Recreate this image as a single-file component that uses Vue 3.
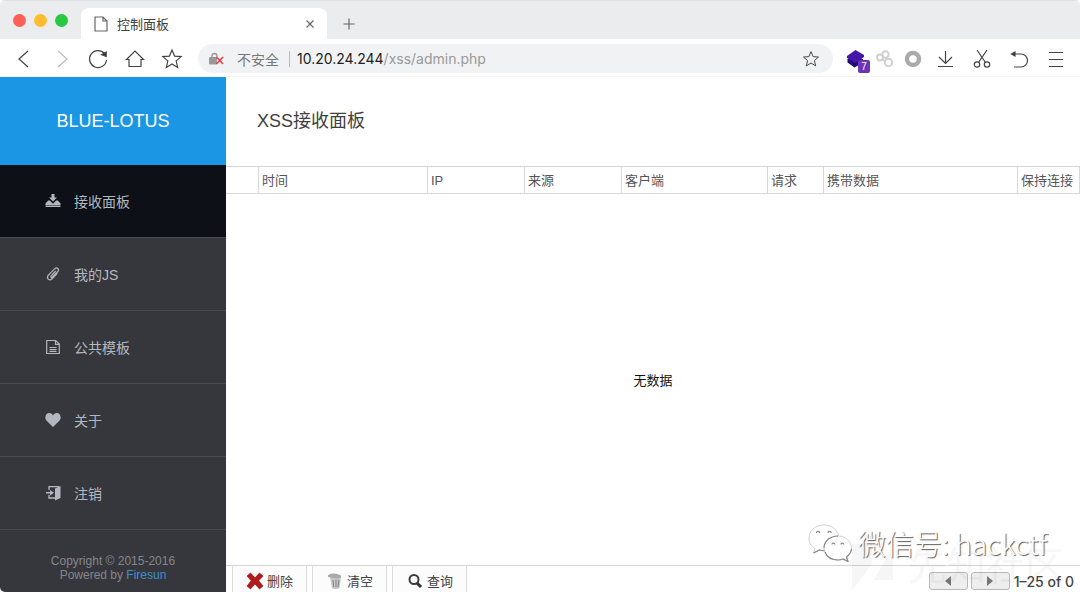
<script setup>
const columns = [
  { label: '', size: 'c-check' },
  { label: '时间', size: 'c-time' },
  { label: 'IP', size: 'c-mid' },
  { label: '来源', size: 'c-mid' },
  { label: '客户端', size: 'c-client' },
  { label: '请求', size: 'c-method' },
  { label: '携带数据', size: 'c-data' },
  { label: '保持连接', size: 'c-keep' },
]
</script>

<template>
  <div class="window">
    <header class="tabs">
      <div class="lights"><i class="red"></i><i class="amber"></i><i class="green"></i></div>
      <div class="tab">
        <svg class="doc" width="14" height="16" viewBox="0 0 14 16"><path d="M1 1h8l4 4v10H1zM9 1v4h4" /></svg>
        <span class="tab-title">控制面板</span>
        <button aria-label="关闭标签页"><svg width="10" height="10" viewBox="0 0 10 10"><path d="M1.500 1.500l7 7M8.500 1.500l-7 7" /></svg></button>
      </div>
      <button class="new-tab" aria-label="新标签页"><svg width="12" height="12" viewBox="0 0 12 12"><path d="M6 .5v11M.5 6h11" /></svg></button>
    </header>

    <nav class="toolbar">
      <button class="tool" aria-label="后退"><svg width="22" height="22" viewBox="0 0 22 22"><path d="M15 3l-9 8 9 8" /></svg></button>
      <button class="tool faded" aria-label="前进"><svg width="22" height="22" viewBox="0 0 22 22"><path d="M8 3l9 8-9 8" /></svg></button>
      <button class="tool" aria-label="刷新"><svg width="22" height="22" viewBox="0 0 22 22"><path d="M17.500 5.500A8.500 8.500 0 1 0 19.500 12" /><path class="solid" d="M19.200 4v4.500l-4.700-1.800z" /></svg></button>
      <button class="tool" aria-label="主页"><svg width="22" height="22" viewBox="0 0 22 22"><path d="M2.500 11.500L11 3l8.500 8.500h-2.500v7H5v-7z" /></svg></button>
      <button class="tool" aria-label="收藏夹"><svg width="22" height="22" viewBox="0 0 22 22"><path d="M11 2l2.600 6.100 6.600.5-5 4.300 1.500 6.500L11 15.900l-5.700 3.500 1.500-6.500-5-4.300 6.600-.5z" /></svg></button>
      <div class="address">
        <svg width="17" height="14" viewBox="0 0 17 14"><path d="M4 6V4a2.500 2.500 0 0 1 5 0v1" fill="none" stroke="#999" stroke-width="1.300" /><rect x="1" y="5" width="8" height="7.500" rx="1" fill="#999" /><path d="M8.500 5l6.500 7M15 5l-6.500 7" stroke="#e9393b" stroke-width="1.500" /></svg>
        <span class="unsafe">不安全</span>
        <span class="url"><b>10.20.24.244</b>/xss/admin.php</span>
        <button aria-label="收藏此页"><svg width="18" height="18" viewBox="0 0 22 22"><path d="M11 2l2.600 6.100 6.600.5-5 4.300 1.500 6.500L11 15.900l-5.700 3.500 1.500-6.500-5-4.300 6.600-.5z" /></svg></button>
      </div>
      <button class="tool ext" aria-label="扩展 7">
        <svg width="24" height="24" viewBox="0 0 24 24"><path d="M2.500 12v3.500l7 5 8.500-5V12z" fill="#210a78" stroke="none" /><path d="M10.500 3l8.500 5v2l-8.500 6L2 11V9z" fill="#4616a8" stroke="none" /></svg>
        <span class="badge">7</span>
      </button>
      <button class="tool ext" aria-label="链接扩展"><svg width="20" height="20" viewBox="0 0 20 20"><g stroke="#d0d0d0" stroke-width="2"><circle cx="5" cy="8.500" r="3" /><circle cx="10.500" cy="5.500" r="3.200" /><circle cx="13.500" cy="13.500" r="3.700" /><path d="M7 10l3 2M11.500 8.500l.5 1.500" /></g></svg></button>
      <button class="tool ext" aria-label="圆环扩展"><svg width="20" height="20" viewBox="0 0 20 20"><circle cx="10" cy="10" r="6" stroke="#aaa" stroke-width="4.500" /></svg></button>
      <button class="tool" aria-label="下载"><svg width="22" height="22" viewBox="0 0 22 22"><path d="M10.500 3v12M4 9l6.500 6.500L17 9M3 18.500h15" /></svg></button>
      <button class="tool" aria-label="截图"><svg width="22" height="22" viewBox="0 0 22 22"><path d="M5 2l8.500 12.500M15 2L6.500 14.500" /><circle cx="5" cy="16.500" r="2.700" /><circle cx="15" cy="16.500" r="2.700" /></svg></button>
      <button class="tool" aria-label="撤销"><svg width="22" height="22" viewBox="0 0 22 22"><path d="M5 6h7a6.500 6.500 0 0 1 0 13H5" /><path class="solid" d="M2.500 6L6 4v4z" /></svg></button>
      <button class="tool" aria-label="菜单"><svg width="22" height="22" viewBox="0 0 22 22"><path d="M3 4.500h14M3 11.500h14M3 18.500h14" /></svg></button>
    </nav>

    <div class="page">
      <aside>
        <h1>BLUE-LOTUS</h1>
        <nav class="menu">
          <a href="#panel" class="active">
            <svg width="16" height="16" viewBox="0 0 16 16"><path d="M6.500 1h3v3.500H12L8 8.500 4 4.500h2.500z" /><path d="M3.200 7.500L.5 10.500V12h15v-1.500l-2.700-3h-1.600L8 10.700 4.800 7.500zM.5 12.600h15V14H.5z" /></svg>
            接收面板
          </a>
          <a href="#myjs">
            <svg class="line" width="16" height="16" viewBox="0 0 16 16"><path d="M10.800 5L6.100 10c-.9 1 .4 2.100 1.300 1.200l5.400-5.700c2-2.300-.8-4.900-3-2.800L3.400 9.200c-2.600 3 .9 6.300 3.700 3.600l5.200-5.400" /></svg>
            我的JS
          </a>
          <a href="#templates">
            <svg class="line" width="16" height="16" viewBox="0 0 16 16"><path d="M1.700 1.500h9l3.600 3.600v9.400H1.700zM10.500 1.500v3.800h3.800M4.500 8.500h7M4.500 10.500h7M4.500 12.300h7" /></svg>
            公共模板
          </a>
          <a href="#about">
            <svg width="16" height="16" viewBox="0 0 16 16"><path d="M8 15L1.700 8.700C-1 6 .6 1 4.300 1c1.700 0 3 1 3.700 2.400C8.700 2 10 1 11.700 1c3.700 0 5.300 5 2.600 7.700z" /></svg>
            关于
          </a>
          <a href="#logout">
            <svg width="16" height="16" viewBox="0 0 16 16"><path d="M15.500 1v12L10 15.500V3.500z" /><path d="M4 5V1.700h10M4 10v3h6" fill="none" stroke="currentColor" stroke-width="1.300" /><path d="M1 7h4V5l4 2.800-4 2.700v-2H1z" /></svg>
            注销
          </a>
        </nav>
        <footer>Copyright © 2015-2016<br />Powered by <a href="#firesun">Firesun</a></footer>
      </aside>

      <main>
        <h2>XSS接收面板</h2>
        <table>
          <thead>
            <tr><th v-for="(c, i) in columns" :key="i" :class="c.size" scope="col">{{ c.label }}</th></tr>
          </thead>
          <tbody>
            <tr><td :colspan="columns.length">无数据</td></tr>
          </tbody>
        </table>

        <div class="community">
          <svg width="46" height="46" viewBox="0 0 46 46"><path d="M0 0h20v20L0 46zM22 36L41 2v34z" fill="#000" /></svg>
          <span>先知社区</span>
        </div>

        <div class="actions">
          <button>
            <svg width="18" height="18" viewBox="0 0 18 18"><path d="M1 4l3.500-3L9 5.700 13.500 1 17 4l-4.300 4.800L17 14l-3.500 3L9 12l-4.500 5L1 14l4.200-5.200z" fill="#b3181b" stroke="#851113" stroke-width=".6" /></svg>
            删除
          </button>
          <button>
            <svg width="18" height="18" viewBox="0 0 18 18"><path d="M4 5h11l-1.500 11q-3.500 2-7.500 0z" fill="#c4c4c4" /><path d="M2 3Q8 0 15 3.500v2Q9 7 2 5z" fill="#aaa" /><path d="M7 8l.7 7M10 8v7M13 8l-1 7" stroke="#888" /></svg>
            清空
          </button>
          <button>
            <svg width="18" height="18" viewBox="0 0 18 18"><circle cx="8" cy="7.500" r="4.500" fill="none" stroke="#3c3c3c" stroke-width="2" /><path d="M11 11l4 4" stroke="#333" stroke-width="3" /></svg>
            查询
          </button>
          <div class="pager">
            <button aria-label="上一页"><svg width="6" height="10" viewBox="0 0 6 10"><path d="M6 0v10L0 5z" /></svg></button>
            <button aria-label="下一页"><svg width="6" height="10" viewBox="0 0 6 10"><path d="M0 0v10l6-5z" /></svg></button>
            <span>1–25 of 0</span>
          </div>
        </div>

        <div class="wechat">
          <svg width="44" height="38" viewBox="0 0 44 38">
            <g fill="#fff" stroke="#d0d0d0" stroke-width="1">
              <path d="M16 1C7 1 1 7 1 14c0 5 2 8 6 10.500L5.500 29l6-3q3 1 6.500.5C31 25 32 14 30 10 28 4 22 1 16 1z" />
              <path d="M30 12c-8 0-14 5.500-14 12s6 12 14 12q2.500 0 5-1l5 2.500-1.500-4.500c3-2 5-5.500 5-9 0-6.500-6-12-13.500-12z" />
            </g>
            <g fill="none" stroke="#888" stroke-width="1.200"><path d="M5.500 29l6-3q3 1 5 .7M17 28c2 5 7 8 13 8q2.500 0 5-1l5 2.500-1.500-4.500q4.500-3.500 5-8M16 24c0-6.500 6-12 14-12" /><path d="M8.500 9a1.600 1.600 0 0 1 3.200 0M20 9a1.600 1.600 0 0 1 3.200 0M24 20.500a1.400 1.400 0 0 1 2.800 0M33 20.500a1.400 1.400 0 0 1 2.800 0" /></g>
          </svg>
          <span>微信号: hackctf</span>
        </div>
      </main>
    </div>
  </div>
</template>

<style>
body { margin: 0; background: #fff; }
</style>

<style scoped>
* { box-sizing: border-box; }
.window { display: flex; flex-direction: column; height: 100vh; overflow: hidden; border-radius: 5px; font-family: "Liberation Sans", "Noto Sans CJK SC", sans-serif; color: #404040; }
button { border: 0; padding: 0; background: none; font: inherit; color: inherit; display: flex; align-items: center; justify-content: center; }
svg { flex: none; display: block; }
a { color: inherit; text-decoration: none; }

.tabs { flex: none; display: flex; height: 39px; background: #ebecee; border-top: 1px solid #dedfe0; }
.lights { display: flex; gap: 8px; padding: 13px 13px 0 13px; }
.lights i { width: 13px; height: 13px; border-radius: 50%; }
.red { background: #ff5f57; }
.amber { background: #febc2e; }
.green { background: #28c840; }
.tab { display: flex; align-items: center; width: 246px; margin-top: 7px; padding: 0 12px 0 13px; background: #fff; border-radius: 8px 8px 0 0; }
.tab-title { flex: 1; margin-left: 9px; font-size: 13px; }
.tab path, .new-tab path { fill: none; stroke: #666; stroke-width: 1.2; }
.new-tab { margin-left: 16px; padding-top: 7px; }

.toolbar { flex: none; display: flex; align-items: center; height: 38px; padding: 2px 5px 0; border-bottom: 1px solid #f3f3f3; background: #fff; }
.tool { position: relative; flex: none; width: 37px; height: 30px; }
.tool.ext { width: 28px; }
.tool svg, .address button svg { fill: none; stroke: #444; stroke-width: 1.2; }
.tool .solid { fill: #333; }
.tool.faded svg { stroke: #bbb; }
.badge { position: absolute; right: 1px; bottom: 1px; width: 12px; height: 13px; border-radius: 2px; background: #6a35b8; color: #fff; font-size: 10px; line-height: 13px; text-align: center; }
.address { flex: 1; display: flex; align-items: center; height: 29px; margin: 0 10px 0 8px; padding: 0 13px 0 10px; border-radius: 15px; background: #f1f2f4; }
.unsafe { margin: 0 10px 0 12px; color: #777; font-size: 14px; }
.url { flex: 1; padding-left: 7px; border-left: 1px solid #bbb; font-family: Inter, sans-serif; font-size: 14px; line-height: 16px; color: #999; }
.url b { font-weight: 400; color: #222; }

.page { flex: 1; display: flex; min-height: 0; }
aside { flex: none; width: 226px; background: #36373c; color: #b5b7bf; }
h1 { margin: 0; height: 88px; line-height: 88px; background: #1a96e4; color: #fff; font-size: 18px; font-weight: 400; text-align: center; }
.menu a { display: flex; align-items: center; gap: 13px; height: 73px; padding-left: 45px; border-bottom: 1px solid #4a4b51; font-size: 14px; }
.menu a.active { background: #0d1017; }
.menu svg { fill: currentColor; }
.menu svg.line { fill: none; stroke: currentColor; stroke-width: 1.2; }
aside footer { padding-top: 24px; color: #85868c; font-size: 12px; line-height: 14px; text-align: center; }
aside footer a { color: #3c90d0; }

main { position: relative; flex: 1; min-width: 0; display: flex; flex-direction: column; background: #fff; }
h2 { flex: none; margin: 0; height: 89px; padding-left: 31px; line-height: 88px; font-size: 18px; font-weight: 400; color: #404040; }
table { flex: 1; width: 100%; display: flex; flex-direction: column; border-collapse: collapse; }
thead tr { display: flex; height: 28px; border-top: 1px solid #d5d5d5; border-bottom: 1px solid #d8d8d8; }
th { padding-left: 3px; border-right: 1px solid #d8d8d8; font-size: 13px; font-weight: 400; line-height: 26px; text-align: left; white-space: nowrap; color: #555; }
.c-check { width: 33px; }
.c-time { width: 169px; }
.c-mid { width: 97px; }
.c-client { width: 146px; }
.c-method { width: 56px; }
.c-data { flex: 1; }
.c-keep { width: 62px; }
tbody, tbody tr { flex: 1; display: flex; }
td { flex: 1; display: flex; align-items: center; justify-content: center; padding: 0; color: #111; font-size: 13px; }
.actions { flex: none; display: flex; gap: 5px; height: 27px; padding-left: 6px; border-top: 1px solid #d5d5d5; }
.actions > button { gap: 3px; width: 75px; height: 30px; border: 1px solid #dcdcdc; border-top: 0; background: #fcfcfc; font-size: 13px; color: #444; }
.pager { display: flex; align-items: center; gap: 3px; height: 30px; margin-left: auto; padding-right: 6px; }
.pager button { width: 39px; height: 18px; border: 1px solid #b8b8b8; border-radius: 3px; background: #eee; }
.pager path { fill: #777; }
.pager span { margin-left: 1px; font-family: Inter, sans-serif; font-size: 14px; font-weight: 500; color: #444; white-space: nowrap; }

/* Translucent marks laid over the lower right corner */
.community, .wechat { position: absolute; display: flex; align-items: center; pointer-events: none; white-space: nowrap; }
.community { right: 16px; bottom: 2px; gap: 10px; font-size: 39px; line-height: 40px; color: #000; opacity: .03; }
.wechat { right: 33px; bottom: 30px; gap: 6px; font-family: "Noto Sans CJK SC", sans-serif; font-size: 28px; font-weight: 300; line-height: 38px; color: #fff; text-shadow: 1px 1px 1px #555; }
</style>
